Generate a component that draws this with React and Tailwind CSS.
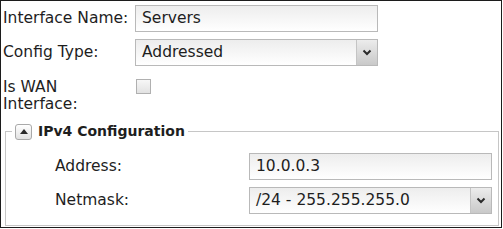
import React from "react";

function Chevron() {
  return (
    <svg width="10" height="7" viewBox="0 0 10 7">
      <polyline points="1.5,1.5 5,5 8.5,1.5" fill="none" stroke="#2a2a2a" strokeWidth="2" />
    </svg>
  );
}

function TextBox({ value, width }) {
  return (
    <div
      className={`flex h-[27px] items-center border border-[#b9b9b9] bg-gradient-to-b from-[#ededed] to-white pl-[6px] ${width}`}
    >
      {value}
    </div>
  );
}

function SelectBox({ value, width }) {
  return (
    <div
      className={`flex h-[27px] items-stretch border border-[#b9b9b9] bg-gradient-to-b from-[#ededed] to-white ${width}`}
    >
      <div className="flex flex-1 items-center pl-[6px]">{value}</div>
      <div className="flex w-[21px] items-center justify-center border-l border-[#c4c4c4] bg-gradient-to-b from-[#ececec] to-[#c9c9c9]">
        <Chevron />
      </div>
    </div>
  );
}

export default function App() {
  return (
    <div
      className="h-[228px] w-[502px] overflow-hidden border border-[#1c1c1c] bg-white text-[15.5px] text-[#1e1e1e]"
      style={{ fontFamily: '"DejaVu Sans", "Liberation Sans", sans-serif' }}
    >
      <div className="pl-[2px] pt-[4px]">
        <div className="flex h-[27px] items-center">
          <div className="w-[132px]">Interface Name:</div>
          <TextBox value="Servers" width="w-[243px]" />
        </div>
        <div className="mt-[7px] flex h-[27px] items-center">
          <div className="w-[132px]">Config Type:</div>
          <SelectBox value="Addressed" width="w-[243px]" />
        </div>
        <div className="mt-[13px] flex h-[32px] items-start">
          <div className="w-[133px] leading-[17px]">
            Is WAN
            <br />
            Interface:
          </div>
          <div className="h-[15px] w-[15px] border border-[#b0b0b0] bg-gradient-to-b from-[#f7f7f7] to-[#e2e2e2]" />
        </div>

        <fieldset className="ml-[2px] mt-[10px] h-[105px] w-[494px] border border-[#c6c6c6]">
          <legend className="ml-[6px] flex items-center gap-[6px] px-[3px]">
            <span className="flex h-[16px] w-[17px] items-center justify-center rounded-[3px] border border-[#a9a9a9] bg-gradient-to-b from-white to-[#e2e2e2]">
              <svg width="8" height="5" viewBox="0 0 8 5">
                <polygon points="0,5 4,0 8,5" fill="#2a2a2a" />
              </svg>
            </span>
            <span className="text-[14px] font-bold">IPv4 Configuration</span>
          </legend>
          <div className="pl-[49px] pt-[11px]">
            <div className="flex h-[27px] items-center">
              <div className="w-[194px]">Address:</div>
              <TextBox value="10.0.0.3" width="w-[243px]" />
            </div>
            <div className="mt-[7px] flex h-[27px] items-center">
              <div className="w-[194px]">Netmask:</div>
              <SelectBox value="/24 - 255.255.255.0" width="w-[243px]" />
            </div>
          </div>
        </fieldset>
      </div>
    </div>
  );
}
